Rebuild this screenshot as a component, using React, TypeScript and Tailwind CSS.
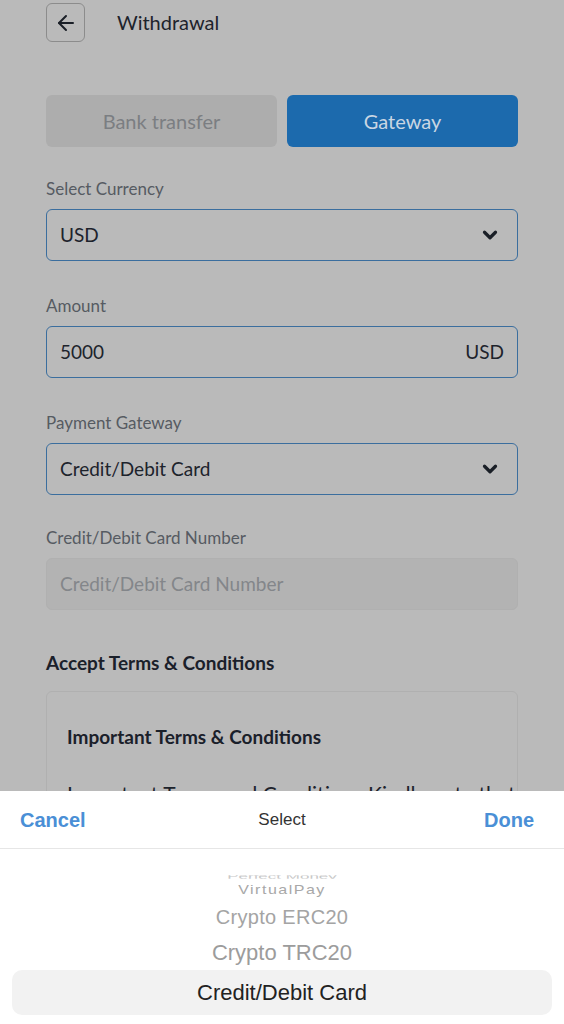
import React from "react";
import { ArrowLeft, ChevronDown } from "lucide-react";

function Label({ children }: { children: React.ReactNode }) {
  return <div className="text-[17px] leading-[22px] text-[#565b62] mb-[9px]">{children}</div>;
}

export default function App() {
  return (
    <div
      className="relative h-[1024px] w-[564px] overflow-hidden bg-[#bababa]"
      style={{ fontFamily: "Lato, 'Noto Sans', sans-serif" }}
    >
      <div className="px-[46px]">
        {/* header */}
        <div className="flex items-center gap-[32px] pt-[3px]">
          <div className="flex h-[39px] w-[39px] items-center justify-center rounded-[6px] border border-[#8c8c8c]">
            <ArrowLeft size={24} strokeWidth={2} color="#1a1f27" />
          </div>
          <div className="-mt-[2px] text-[20px] text-[#1d232c]">Withdrawal</div>
        </div>

        {/* tabs */}
        <div className="mt-[53px] flex gap-[10px]">
          <div className="flex h-[52px] flex-1 items-center justify-center rounded-[6px] bg-[#adadad] text-[20px] text-[#7b7e82]">
            Bank transfer
          </div>
          <div className="flex h-[52px] flex-1 items-center justify-center rounded-[6px] bg-[#1c6aad] text-[20px] text-[#c9d6e3]">
            Gateway
          </div>
        </div>

        {/* currency */}
        <div className="mt-[31px]">
          <Label>Select Currency</Label>
          <div className="flex h-[52px] items-center justify-between rounded-[6px] border-[1.5px] border-[#3b6e9e] pl-[13px] pr-[16px]">
            <span className="text-[19px] text-[#1d232c]">USD</span>
            <ChevronDown size={22} strokeWidth={3.5} color="#1a1f27" />
          </div>
        </div>

        {/* amount */}
        <div className="mt-[34px]">
          <Label>Amount</Label>
          <div className="flex h-[52px] items-center justify-between rounded-[6px] border-[1.5px] border-[#3b6e9e] pl-[13px] pr-[13px]">
            <span className="text-[19px] text-[#1d232c]">5000</span>
            <span className="text-[19px] text-[#1d232c]">USD</span>
          </div>
        </div>

        {/* gateway */}
        <div className="mt-[34px]">
          <Label>Payment Gateway</Label>
          <div className="flex h-[52px] items-center justify-between rounded-[6px] border-[1.5px] border-[#3b6e9e] pl-[13px] pr-[16px]">
            <span className="text-[19px] text-[#1d232c]">Credit/Debit Card</span>
            <ChevronDown size={22} strokeWidth={3.5} color="#1a1f27" />
          </div>
        </div>

        {/* card number */}
        <div className="mt-[32px]">
          <Label>Credit/Debit Card Number</Label>
          <div className="flex h-[52px] items-center rounded-[6px] border border-[#b0b0b0] bg-[#b3b3b3] pl-[13px]">
            <span className="text-[19px] text-[#83868a]">Credit/Debit Card Number</span>
          </div>
        </div>

        {/* terms */}
        <div className="mt-[39px] text-[19px] font-bold text-[#1a202a]">Accept Terms &amp; Conditions</div>
        <div className="mt-[13px] rounded-[6px] border border-[#b0b0b0] px-[20px] pt-[31px]">
          <div className="text-[19px] font-bold text-[#1a202a]">Important Terms &amp; Conditions</div>
          <div className="mt-[27px] whitespace-nowrap text-[21px] text-[#1d232c]">
            Important Terms and Conditions Kindly note that
          </div>
        </div>
      </div>

      {/* bottom sheet */}
      <div
        className="absolute bottom-0 left-0 right-0 top-[791px] bg-white"
        style={{ fontFamily: "'Liberation Sans', Arial, sans-serif" }}
      >
        <div className="grid h-[58px] grid-cols-3 items-center border-b border-[#e6e6e6] px-[20px]">
          <span className="justify-self-start text-[20px] font-bold text-[#4a8fd6]">Cancel</span>
          <span className="justify-self-center text-[17px] text-[#333]">Select</span>
          <span className="mr-[10px] justify-self-end text-[20px] font-bold text-[#4a8fd6]">Done</span>
        </div>
        <div className="relative flex flex-col items-center">
          <div className="mt-[24px] h-[8px] overflow-hidden text-[17px] leading-[8px] text-[#c8c8c8] scale-y-[0.45]">
            Perfect Money
          </div>
          <div className="mt-[1px] text-[16px] leading-[16px] text-[#a8a8a8] scale-y-[0.78] tracking-[1.5px]">VirtualPay</div>
          <div className="mt-[8px] text-[20px] leading-[22px] text-[#a4a4a4] tracking-[0.3px]">Crypto ERC20</div>
          <div className="mt-[13px] text-[22px] leading-[24px] text-[#9c9c9c]">Crypto TRC20</div>
          <div className="mx-[12px] mt-[5px] flex h-[45px] w-[540px] items-center justify-center rounded-[10px] bg-[#f2f2f2] text-[22px] text-[#222]">
            Credit/Debit Card
          </div>
        </div>
      </div>
    </div>
  );
}
